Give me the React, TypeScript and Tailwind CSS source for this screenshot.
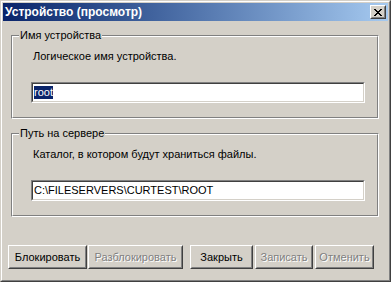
import React from "react";

const font = { fontFamily: '"Liberation Sans", Arial, sans-serif' };

function Raised({ children, className = "" }: { children: React.ReactNode; className?: string }) {
  return (
    <div className={`border border-t-white border-l-white border-r-[#404040] border-b-[#404040] bg-[#d4d0c8] ${className}`}>
      <div className="w-full h-full border border-t-[#d4d0c8] border-l-[#d4d0c8] border-r-[#808080] border-b-[#808080] flex items-center justify-center">
        {children}
      </div>
    </div>
  );
}

function Button({ label, w, disabled = false }: { label: string; w: string; disabled?: boolean }) {
  return (
    <Raised className={`${w} h-[24px]`}>
      <span
        className={
          disabled
            ? "text-[11px] text-[#808080] [text-shadow:1px_1px_0_#ffffff] leading-none"
            : "text-[11px] text-black leading-none"
        }
      >
        {label}
      </span>
    </Raised>
  );
}

function Input({ children }: { children: React.ReactNode }) {
  return (
    <div className="w-[334px] h-[21px] border border-t-[#808080] border-l-[#808080] border-r-white border-b-white">
      <div className="w-full h-full border border-t-[#404040] border-l-[#404040] border-r-[#d4d0c8] border-b-[#d4d0c8] bg-white flex items-center pl-[1px]">
        {children}
      </div>
    </div>
  );
}

function GroupBox({
  legend,
  desc,
  children,
}: {
  legend: string;
  desc: string;
  children: React.ReactNode;
}) {
  return (
    <div className="relative w-[368px] h-[84px] border border-t-[#808080] border-l-[#808080] border-r-white border-b-white">
      <span className="absolute left-[7px] top-[-8px] bg-[#d4d0c8] px-[1px] text-[11px] leading-[14px] text-black">
        {legend}
      </span>
      <div className="w-full h-full border border-t-white border-l-white border-r-[#808080] border-b-[#808080] pl-[18px] pt-[12px]">
        <div className="text-[11px] leading-[14px] text-black pl-[2px]">{desc}</div>
        <div className="mt-[19px]">{children}</div>
      </div>
    </div>
  );
}

export default function App() {
  return (
    <div style={font} className="w-[391px] h-[282px] bg-[#d4d0c8]">
      <div className="w-full h-full border border-t-[#d4d0c8] border-l-[#d4d0c8] border-r-[#404040] border-b-[#404040]">
        <div className="w-full h-full border border-t-white border-l-white border-r-[#808080] border-b-[#808080] p-[1px] flex flex-col">
          <div className="h-[18px] bg-gradient-to-r from-[#0a246a] to-[#a6caf0] flex items-center justify-between pl-[2px] pr-[2px]">
            <span className="text-white font-bold text-[12px] leading-none">Устройство (просмотр)</span>
            <Raised className="w-[16px] h-[14px]">
              <svg width="8" height="7" viewBox="0 0 8 7" shapeRendering="crispEdges">
                <path d="M0 0h2v1H0zM6 0h2v1H6zM1 1h2v1H1zM5 1h2v1H5zM2 2h4v1H2zM3 3h2v1H3zM2 4h4v1H2zM1 5h2v1H1zM5 5h2v1H5zM0 6h2v1H0zM6 6h2v1H6z" fill="#000" />
              </svg>
            </Raised>
          </div>
          <div className="flex flex-col pl-[8px] pt-[14px]">
            <GroupBox legend="Имя устройства" desc="Логическое имя устройства.">
              <Input>
                <span className="bg-[#0a246a] text-white text-[11px] leading-[13px]">root</span>
              </Input>
            </GroupBox>
            <div className="mt-[14px]">
              <GroupBox legend="Путь на сервере" desc="Каталог, в котором будут храниться файлы.">
                <Input>
                  <span className="text-black text-[11px] leading-[13px]">C:\FILESERVERS\CURTEST\ROOT</span>
                </Input>
              </GroupBox>
            </div>
          </div>
          <div className="flex mt-[28px] pl-[5px]">
            <Button label="Блокировать" w="w-[79px]" />
            <div className="ml-[1px]">
              <Button label="Разблокировать" w="w-[95px]" disabled />
            </div>
            <div className="ml-[7px]">
              <Button label="Закрыть" w="w-[63px]" />
            </div>
            <div className="ml-[2px]">
              <Button label="Записать" w="w-[58px]" disabled />
            </div>
            <div className="ml-[2px]">
              <Button label="Отменить" w="w-[59px]" disabled />
            </div>
          </div>
        </div>
      </div>
    </div>
  );
}
